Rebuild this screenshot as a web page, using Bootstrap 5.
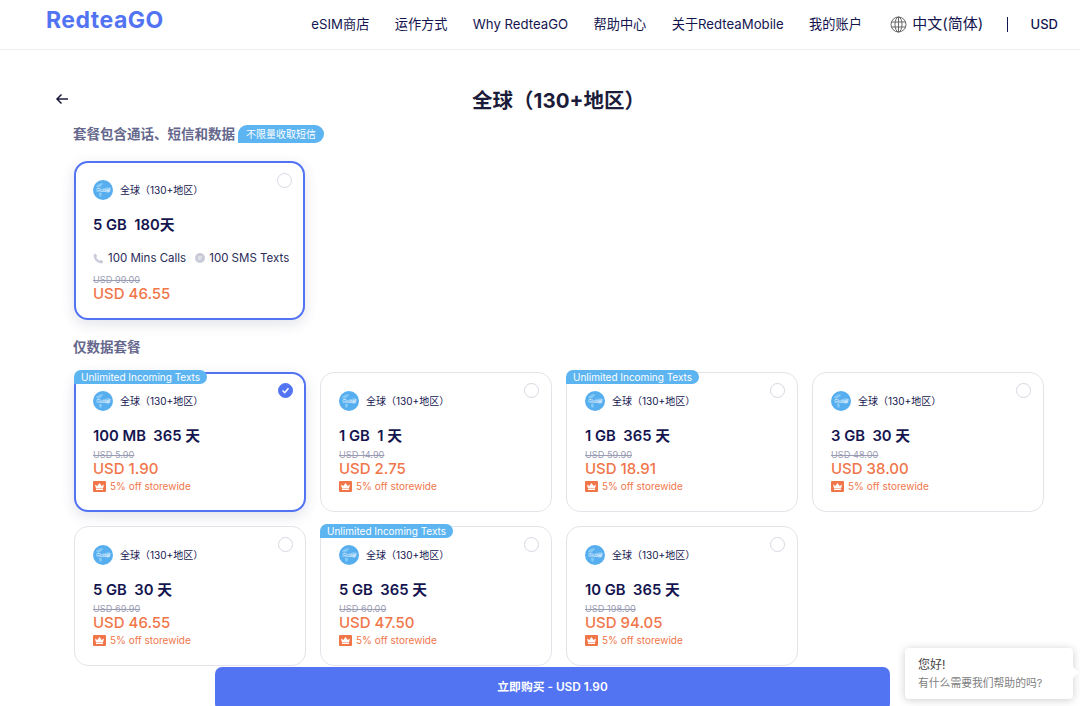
<!DOCTYPE html>
<html lang="zh-CN">
<head>
  <meta charset="UTF-8">
  <meta name="viewport" content="width=device-width, initial-scale=1.0">
  <title>RedteaGO</title>
  <link href="https://cdn.jsdelivr.net/npm/bootstrap@5.3.0/dist/css/bootstrap.min.css" rel="stylesheet">
  <style>
    body {
      font-family: Inter, "Noto Sans CJK SC", sans-serif;
      color: #14154f;
      background: #fff;
      height: 706px;
      overflow: hidden;
    }
    .top-bar {
      height: 50px;
      border-bottom: 1px solid #eceef1;
      padding: 0 22px 0 46px;
    }
    .brand-name {
      font-size: 23px;
      font-weight: 700;
      color: #5273f2;
      letter-spacing: .5px;
      line-height: 1;
      margin-top: -8px;
    }
    .top-links {
      gap: 25.4px;
      font-size: 13.2px;
      color: #14154f;
    }
    .lang-item { font-size: 15px; gap: 5px; margin: 0 -2px 0 3px; }
    .cur-item {
      border-left: 1px solid #14154f;
      padding-left: 23px;
      height: 15px;
      line-height: 15px;
      font-size: 13px;
      font-weight: 500;
    }
    .page-body { padding: 0 36px 0 73px; }
    .title-row { height: 49px; margin-top: 26px; padding-top: 2px; }
    .back-arrow { left: -18px; top: 16px; }
    .page-title { font-size: 20.5px; font-weight: 700; margin: 0; color: #1b1b3a; }
    .group-label {
      font-size: 13.5px;
      font-weight: 600;
      color: #65678c;
      line-height: 18px;
    }
    .label-data { margin-top: 18px; }
    .free-tag {
      font-size: 10px;
      line-height: 18px;
      color: #fff;
      background: #5cb4f0;
      border-radius: 9px 9px 9px 0;
      padding: 0 8px;
      margin-left: 3px;
      font-weight: 400;
    }
    .plan-grid {
      display: grid;
      grid-template-columns: repeat(4, 232px);
      gap: 14px;
      margin-left: 1px;
    }
    .grid-combo { margin-top: 18px; }
    .grid-data { margin-top: 16px; }
    .plan-box {
      position: relative;
      height: 140px;
      border: 1px solid #e3e4ea;
      border-radius: 14px;
      background: #fff;
      padding: 18px 18px 0 18px;
    }
    .plan-box.picked {
      border: 2px solid #5273f2;
      box-shadow: 0 4px 14px rgba(40, 50, 110, .14);
      padding: 17px 17px 0 17px;
    }
    .plan-box.tall { height: 159px; width: 231px; }
    .radio-dot {
      position: absolute;
      top: 10px;
      right: 12px;
      width: 15px;
      height: 15px;
      border: 1px solid #d6d8e2;
      border-radius: 50%;
      background: #fff;
    }
    .picked .radio-dot { top: 9px; right: 11px; }
    .tall .radio-dot { top: 10px; right: 11px; }
    .radio-on {
      background: #5273f2;
      border-color: #5273f2;
      display: flex;
      align-items: center;
      justify-content: center;
    }
    .incoming-tag {
      position: absolute;
      top: -3px;
      left: -1px;
      font-size: 10px;
      line-height: 14px;
      height: 14px;
      color: #fff;
      background: #5cb4f0;
      border-radius: 7px 7px 7px 0;
      padding: 0 7px;
    }
    .picked .incoming-tag { top: -4px; left: -2px; }
    .region-row { gap: 7px; font-size: 10px; line-height: 20px; color: #14154f; height: 20px; }
    .plan-name { font-size: 14.8px; font-weight: 600; line-height: 20px; margin-top: 15px; color: #14154f; }
    .old-price {
      font-size: 9.2px;
      line-height: 10px;
      margin-top: 4px;
      color: #9a9cb3;
      text-decoration: line-through;
    }
    .now-price { font-size: 15px; font-weight: 500; line-height: 18px; color: #f0764a; }
    .off-row { gap: 4px; font-size: 10px; line-height: 14px; color: #f0764a; margin-top: 1px; }
    .crown-box {
      width: 13px;
      height: 11px;
      background: #f0764a;
      border-radius: 1px;
      display: flex;
      align-items: center;
      justify-content: center;
    }
    .allow-row { gap: 4px; font-size: 11.5px; line-height: 16px; margin-top: 15px; color: #2a2b58; white-space: nowrap; }
    .allow-row svg { flex-shrink: 0; }
    .allow-row span { margin-right: 5px; }
    .tall .old-price { margin-top: 9px; }
    .buy-btn {
      position: absolute;
      left: 215px;
      top: 667px;
      width: 675px;
      height: 44px;
      background: #5273f2;
      border: 0;
      border-radius: 7px;
      color: #fff;
      font-size: 11.8px;
      font-weight: 600;
      padding-bottom: 4px;
    }
    .chat-pop {
      position: absolute;
      left: 905px;
      top: 648px;
      width: 168px;
      height: 51px;
      background: #fff;
      border-radius: 4px;
      box-shadow: 0 1px 8px rgba(0, 0, 0, .2);
      padding: 8px 13px;
      font-size: 12px;
      line-height: 18px;
      color: #444;
    }
    .chat-pop::after {
      content: "";
      position: absolute;
      right: -4px;
      top: 20px;
      width: 9px;
      height: 9px;
      background: #fff;
      transform: rotate(45deg);
    }
    .chat-sub { font-size: 10.8px; color: #808080; line-height: 19px; }
  </style>
</head>
<body>

  <header class="top-bar d-flex align-items-center justify-content-between">
    <div class="brand-name">RedteaGO</div>
    <nav class="top-links d-flex align-items-center">
      <span>eSIM商店</span>
      <span>运作方式</span>
      <span>Why RedteaGO</span>
      <span>帮助中心</span>
      <span>关于RedteaMobile</span>
      <span>我的账户</span>
      <span class="lang-item d-flex align-items-center">
        <svg width="17" height="17" viewBox="0 0 17 17" fill="none" stroke="#666" stroke-width="1"><circle cx="8.5" cy="8.5" r="7.5"/><ellipse cx="8.5" cy="8.5" rx="3.5" ry="7.5"/><path d="M8.5 1v15M1.2 6h14.6M1.2 11h14.6"/></svg>
        中文(简体)
      </span>
      <span class="cur-item">USD</span>
    </nav>
  </header>

  <main class="page-body">
    <div class="title-row position-relative d-flex align-items-center justify-content-center">
      <svg class="back-arrow position-absolute" width="14" height="14" viewBox="0 0 14 14" fill="none" stroke="#1b1b3a" stroke-width="1.5"><path d="M13 7H2M6.500 2.500 2 7l4.500 4.500"/></svg>
      <h1 class="page-title">全球（130+地区）</h1>
    </div>

    <div class="group-label d-flex align-items-center">套餐包含通话、短信和数据<span class="free-tag">不限量收取短信</span></div>

    <div class="plan-grid grid-combo">
      <div class="plan-box picked tall">
        <span class="radio-dot"></span>
        <div class="region-row d-flex align-items-center"><svg width="20" height="20" viewBox="0 0 20 20"><circle cx="10" cy="10" r="10" fill="#57aeef"/><path d="M3 6c2-2 5-3 7-3 0 2-2 3-3 4s-3 1-4-1zM12 8c2-1 4-1 6 0 0 3-2 5-4 5-1-1-3-3-2-5zM6 13c1-1 3 0 3 1s-1 3-2 3c-1-1-1-3-1-4z" fill="#84c8f6"/><text x="10" y="11.500" font-size="4.500" fill="#fff" text-anchor="middle" font-family="Inter">Global</text></svg>全球（130+地区）</div>
        <div class="plan-name">5 GB&nbsp;&nbsp;180天</div>
        <div class="allow-row d-flex align-items-center">
          <svg width="11" height="11" viewBox="0 0 10 10"><path d="M2 .5 3.800 2.600 3 4c.5 1.200 1.500 2.200 3 3l1.400-.8L9.500 8 8.200 9.500C4 9.500.5 6 .5 1.800z" fill="#c9cbd8"/></svg>
          <span>100 Mins Calls</span>
          <svg width="10" height="10" viewBox="0 0 10 10"><circle cx="5" cy="5" r="5" fill="#c9cbd8"/><path d="M3 4h4M3 6h3" stroke="#fff" stroke-width=".8"/></svg>
          <span>100 SMS Texts</span>
        </div>
        <div class="old-price">USD 99.00</div>
        <div class="now-price">USD 46.55</div>
      </div>
    </div>

    <div class="group-label label-data">仅数据套餐</div>

    <div class="plan-grid grid-data" id="dataPlans"></div>
  </main>

  <button class="buy-btn" type="button">立即购买 - USD 1.90</button>

  <div class="chat-pop">
    <div>您好!</div>
    <div class="chat-sub">有什么需要我们帮助的吗?</div>
  </div>

  <script src="https://cdn.jsdelivr.net/npm/bootstrap@5.3.0/dist/js/bootstrap.bundle.min.js"></script>
  <script>
    const globe = '<svg width="20" height="20" viewBox="0 0 20 20"><circle cx="10" cy="10" r="10" fill="#57aeef"/><path d="M3 6c2-2 5-3 7-3 0 2-2 3-3 4s-3 1-4-1zM12 8c2-1 4-1 6 0 0 3-2 5-4 5-1-1-3-3-2-5zM6 13c1-1 3 0 3 1s-1 3-2 3c-1-1-1-3-1-4z" fill="#84c8f6"/><text x="10" y="11.500" font-size="4.500" fill="#fff" text-anchor="middle" font-family="Inter">Global</text></svg>';
    const crown = '<svg width="9" height="7" viewBox="0 0 9 7"><path d="M0 1.500 2.300 3 4.500 0 6.700 3 9 1.500 8 5.500H1zM1 6h7v1H1z" fill="#fff"/></svg>';
    const tick = '<svg width="9" height="9" viewBox="0 0 9 9" fill="none" stroke="#fff" stroke-width="1.500"><path d="M1.500 4.500 3.700 6.700 7.500 2.200"/></svg>';

    const plans = [
      { name: "100 MB&nbsp;&nbsp;365 天", old: "USD 5.90", now: "USD 1.90", tag: true, on: true },
      { name: "1 GB&nbsp;&nbsp;1 天", old: "USD 14.90", now: "USD 2.75" },
      { name: "1 GB&nbsp;&nbsp;365 天", old: "USD 59.90", now: "USD 18.91", tag: true },
      { name: "3 GB&nbsp;&nbsp;30 天", old: "USD 48.00", now: "USD 38.00" },
      { name: "5 GB&nbsp;&nbsp;30 天", old: "USD 69.90", now: "USD 46.55" },
      { name: "5 GB&nbsp;&nbsp;365 天", old: "USD 60.00", now: "USD 47.50", tag: true },
      { name: "10 GB&nbsp;&nbsp;365 天", old: "USD 198.00", now: "USD 94.05" }
    ];

    document.getElementById("dataPlans").innerHTML = plans.map(p => `
      <div class="plan-box${p.on ? " picked" : ""}">
        ${p.tag ? '<span class="incoming-tag">Unlimited Incoming Texts</span>' : ""}
        <span class="radio-dot${p.on ? " radio-on" : ""}">${p.on ? tick : ""}</span>
        <div class="region-row d-flex align-items-center">${globe}全球（130+地区）</div>
        <div class="plan-name">${p.name}</div>
        <div class="old-price">${p.old}</div>
        <div class="now-price">${p.now}</div>
        <div class="off-row d-flex align-items-center"><span class="crown-box">${crown}</span>5% off storewide</div>
      </div>`).join("");
  </script>
</body>
</html>
